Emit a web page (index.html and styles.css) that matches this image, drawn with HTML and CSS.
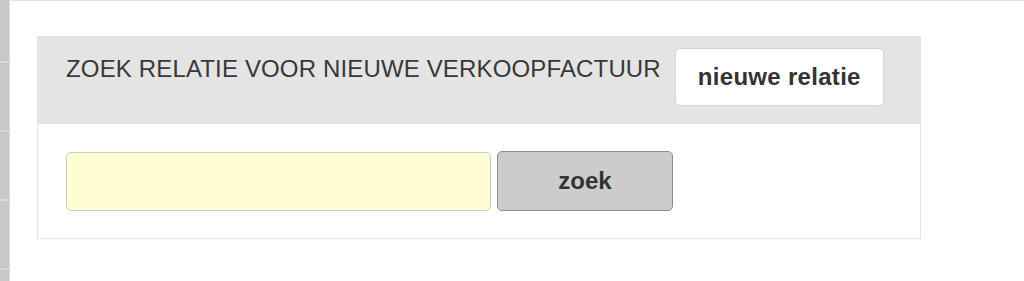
FILE: index.html
```html
<!DOCTYPE html>
<html lang="nl">
<head>
  <meta charset="UTF-8" />
  <title>Zoek relatie</title>
  <link rel="stylesheet" href="styles.css">
</head>
<body>
  <div class="side">
    <div class="side-item"></div>
    <div class="side-item"></div>
    <div class="side-item"></div>
    <div class="side-item"></div>
  </div>

  <div class="main">
    <div class="panel">
      <div class="panel-header">
        <h2 class="panel-title">ZOEK RELATIE VOOR NIEUWE VERKOOPFACTUUR</h2>
        <button class="btn-new">nieuwe relatie</button>
      </div>
      <div class="panel-body">
        <input type="text" class="search-input" />
        <button class="btn-search">zoek</button>
      </div>
    </div>
  </div>
</body>
</html>
```

FILE: styles.css
```css
* {
  box-sizing: border-box;
}
html, body {
  height: 100%;
}
body {
  margin: 0;
  display: flex;
  font-family: "Liberation Sans", Arial, Helvetica, sans-serif;
  color: #333;
  background: white;
  overflow: hidden;
}
.side {
  width: 10px;
  flex-shrink: 0;
  background: #c8c8c8;
  border-right: 1px solid #dcdcdc;
  margin-top: -6px;
}
.side-item {
  height: 69px;
  border-bottom: 2px solid #d9d9d9;
}
.main {
  flex: 1;
  border-top: 1px solid #e2e2e2;
  padding: 35px 0 0 27px;
}
.panel {
  width: 884px;
  border: 1px solid #e3e3e3;
}
.panel-header {
  display: flex;
  align-items: flex-start;
  height: 87px;
  padding: 11px 28px 0 28px;
  background: #e4e4e4;
}
.panel-title {
  margin: 7px 0 0 0;
  font-size: 24px;
  line-height: 28px;
  font-weight: normal;
  letter-spacing: 0.15px;
  color: #383838;
  white-space: nowrap;
}
.btn-new {
  margin-left: 14px;
  height: 58px;
  padding: 0 22px;
  font-family: inherit;
  font-size: 24px;
  line-height: 28px;
  font-weight: bold;
  letter-spacing: 0.3px;
  color: #333;
  background: white;
  border: 1px solid #d6d6d6;
  border-radius: 5px;
}
.panel-body {
  display: flex;
  align-items: flex-start;
  padding: 27px 28px 27px 28px;
}
.search-input {
  width: 425px;
  height: 59px;
  margin-top: 1px;
  background: #ffffd3;
  border: 1px solid #cacaca;
  border-radius: 5px;
  font-size: 24px;
  font-family: inherit;
}
.btn-search {
  margin-left: 6px;
  width: 176px;
  height: 60px;
  font-family: inherit;
  font-size: 24px;
  font-weight: bold;
  color: #333;
  background: #cccccc;
  border: 1px solid #8c8c8c;
  border-radius: 5px;
}
```
